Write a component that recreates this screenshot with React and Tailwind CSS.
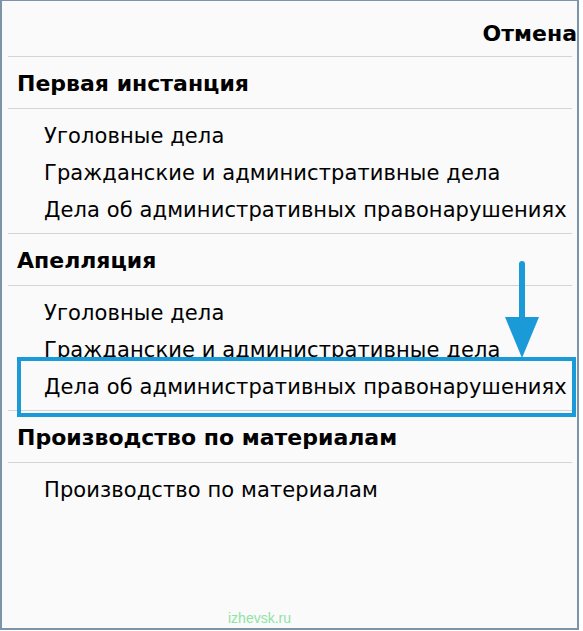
import React from "react"

const font = { fontFamily: '"DejaVu Sans", Tahoma, sans-serif' }

const sections = [
  {
    title: "Первая инстанция",
    items: ["Уголовные дела", "Гражданские и административные дела", "Дела об административных правонарушениях"],
  },
  {
    title: "Апелляция",
    items: ["Уголовные дела", "Гражданские и административные дела", "Дела об административных правонарушениях"],
  },
  {
    title: "Производство по материалам",
    items: ["Производство по материалам"],
  },
]

function Divider() {
  return <div className="ml-[6px] mr-[5px] h-px bg-[#d4d4d4]" />
}

export default function App() {
  return (
    <div className="w-[583px] h-[631px] bg-white">
      <div
        className="relative w-[579px] h-[630px] bg-[#fafafa] border-l-2 border-r-2 border-b-2 border-t border-[#7b94aa] text-black overflow-hidden"
        style={font}
      >
        <div className="h-[55px] flex items-center justify-end pt-[9px] text-[22px] font-bold">
          Отмена
        </div>
        <Divider />

        {sections.map((s) => (
          <div key={s.title}>
            <div className="h-[51px] flex items-center pl-[15px] pt-[2px] text-[22px] font-bold">{s.title}</div>
            <Divider />
            <div className="pt-[9px] pb-[4px]">
              {s.items.map((it) => (
                <div key={it} className="h-[37px] flex items-center pl-[42px] text-[21px] tracking-[0.1px]">
                  {it}
                </div>
              ))}
            </div>
            {s.items.length > 1 && <Divider />}
          </div>
        ))}

        {/* annotation: highlight box */}
        <div className="absolute left-[15px] top-[356px] w-[559px] h-[60px] border-[4px] border-[#1b9ad8]" />

        {/* annotation: arrow */}
        <svg className="absolute left-[498px] top-[258px]" width="44" height="102" viewBox="0 0 44 102">
          <line x1="22" y1="5" x2="22" y2="62" stroke="#1b9ad8" strokeWidth="6" strokeLinecap="round" />
          <polygon points="5,58 39,58 22,99" fill="#1b9ad8" />
        </svg>

        <div className="absolute left-[226px] bottom-[-2px]">
          <span className="text-[14px] text-[#8ee3a4] leading-none" style={{ fontFamily: '"Liberation Sans", Arial, sans-serif' }}>
            izhevsk.ru
          </span>
        </div>
      </div>
    </div>
  )
}
